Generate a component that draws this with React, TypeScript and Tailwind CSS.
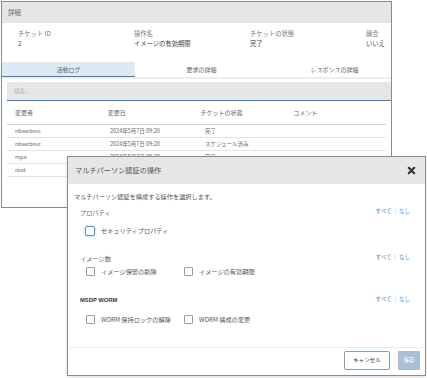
import React from "react";

const Box = ({ focused = false }: { focused?: boolean }) =>
  focused ? (
    <span className="inline-block w-[10px] h-[10px] rounded-[2px] border border-[#5b8fc7] shadow-[0_0_2px_#9cc0e6] bg-white" />
  ) : (
    <span className="inline-block w-[9px] h-[9px] rounded-[1px] border border-[#9a9a9a] bg-white" />
  );

const Links = () => (
  <div className="flex items-center gap-[3px] text-[5.5px] text-[#4a8fd4] -mt-[2px]">
    <span>すべて</span>
    <span className="text-[#9bbbe0]">|</span>
    <span>なし</span>
  </div>
);

const rows = [
  ["nbwebsvc", "2024年5月7日 09:20", "完了"],
  ["nbwebsvc", "2024年5月7日 09:20", "スケジュール済み"],
  ["mpa", "2024年5月7日 09:20", "完了"],
  ["root", "", ""],
];

export default function App() {
  return (
    <div className="relative w-[427px] h-[378px] bg-white overflow-hidden font-['Noto_Sans_CJK_JP','Liberation_Sans',sans-serif] text-[#444]">
      {/* background window */}
      <div className="ml-[1px] mt-[1px] w-[391px] h-[207px] border border-[#8a8a8a] overflow-hidden flex flex-col bg-white">
        <div className="h-[21px] shrink-0 bg-[#e6e6e6] flex items-center px-[6px] text-[6.5px] text-[#666]">詳細</div>
        <div className="h-[39px] shrink-0 flex pl-[16px] pt-[7px] text-[6.3px]">
          {[
            ["チケット ID", "2"],
            ["操作名", "イメージの有効期限"],
            ["チケットの状態", "完了"],
            ["競合", "いいえ"],
          ].map(([l, v], i) => (
            <div key={i} className="w-[116px] shrink-0 flex flex-col gap-[2px]">
              <div className="h-[8px] leading-[8px] text-[#777]">{l}</div>
              <div className="h-[8px] leading-[8px] text-[#444]">{v}</div>
            </div>
          ))}
        </div>
        <div className="h-[17px] shrink-0 flex text-[6px] text-[#666] border-b-[2px] border-[#eeeeee]">
          <div className="w-[133px] shrink-0 bg-[#dde9f3] border-b border-[#3a7fc0] flex items-center justify-center">活動ログ</div>
          <div className="w-[133px] shrink-0 flex items-center justify-center">要求の詳細</div>
          <div className="w-[133px] shrink-0 flex items-center justify-center">レスポンスの詳細</div>
        </div>
        <div className="mt-[3px] ml-[5px] w-[390px] h-[19px] shrink-0 bg-[#e6e6e6] border-b border-[#3a7fc0] flex items-center px-[7px] text-[5.5px] text-[#b5b5b5]">検索...</div>
        <div className="px-[5px] text-[5.5px]">
          <div className="h-[24px] flex items-center pl-[8px] border-b border-[#cfcfcf] text-[6px] text-[#666]">
            <div className="w-[95px]">変更者</div>
            <div className="w-[95px]">変更日</div>
            <div className="w-[95px]">チケットの状態</div>
            <div className="w-[95px]">コメント</div>
          </div>
          {rows.map((r, i) => (
            <div key={i} className="h-[13px] flex items-center pl-[8px] border-b border-[#e2e2e2] text-[#666]">
              <div className="w-[95px]">{r[0]}</div>
              <div className="w-[95px]">{r[1]}</div>
              <div className="w-[95px]">{r[2]}</div>
            </div>
          ))}
        </div>
      </div>

      {/* modal */}
      <div className="absolute left-[67px] top-[156px] w-[359px] h-[220px] border border-[#8c8c8c] bg-white flex flex-col shadow-[0_1px_3px_rgba(0,0,0,0.15)]">
        <div className="h-[27px] shrink-0 bg-[#e6e6e6] flex items-center justify-between pl-[7px] pr-[9px]">
          <span className="text-[7.2px] text-[#555]">マルチパーソン認証の操作</span>
          <svg width="9" height="9" viewBox="0 0 10 10">
            <path d="M2 2 L8 8 M8 2 L2 8" stroke="#333" strokeWidth="2.4" strokeLinecap="round" />
          </svg>
        </div>
        <div className="flex flex-col text-[6.2px] text-[#555]">
          <div className="mt-[8px] h-[9px] leading-[9px] pl-[6px] text-[6.2px]">マルチパーソン認証を構成する操作を選択します。</div>

          <div className="mt-[7px] h-[9px] flex items-center justify-between pl-[12px] pr-[15px]">
            <span className="text-[#666]">プロパティ</span>
            <Links />
          </div>
          <div className="mt-[9px] h-[10px] flex items-center pl-[17px]">
            <div className="flex items-center gap-[6px]">
              <Box focused />
              <span>セキュリティプロパティ</span>
            </div>
          </div>

          <div className="mt-[18px] h-[9px] flex items-center justify-between pl-[12px] pr-[15px]">
            <span className="text-[#666]">イメージ数</span>
            <Links />
          </div>
          <div className="mt-[4px] h-[10px] flex items-center pl-[18px]">
            <div className="w-[98px] flex items-center gap-[6px]">
              <Box />
              <span>イメージ保留の削除</span>
            </div>
            <div className="flex items-center gap-[6px]">
              <Box />
              <span>イメージの有効期限</span>
            </div>
          </div>

          <div className="mt-[19px] h-[9px] flex items-center justify-between pl-[12px] pr-[15px]">
            <span className="font-bold text-[5.8px] text-[#333] font-['Liberation_Sans',sans-serif]">MSDP WORM</span>
            <Links />
          </div>
          <div className="mt-[10px] h-[10px] flex items-center pl-[18px]">
            <div className="w-[98px] flex items-center gap-[6px]">
              <Box />
              <span>WORM 保持ロックの解除</span>
            </div>
            <div className="flex items-center gap-[6px]">
              <Box />
              <span>WORM 構成の変更</span>
            </div>
          </div>
        </div>
        <div className="mt-auto h-[28px] border-t border-[#ececec] flex items-start justify-end gap-[8px] pr-[5px] pt-[3px]">
          <div className="w-[46px] h-[19px] rounded-[2px] border border-[#7f9fbf] bg-white flex items-center justify-center text-[5.5px] text-[#333]">キャンセル</div>
          <div className="w-[22px] h-[19px] rounded-[1px] bg-[#a9bfd4] flex items-center justify-center text-[5.5px] text-white">保存</div>
        </div>
      </div>
    </div>
  );
}
